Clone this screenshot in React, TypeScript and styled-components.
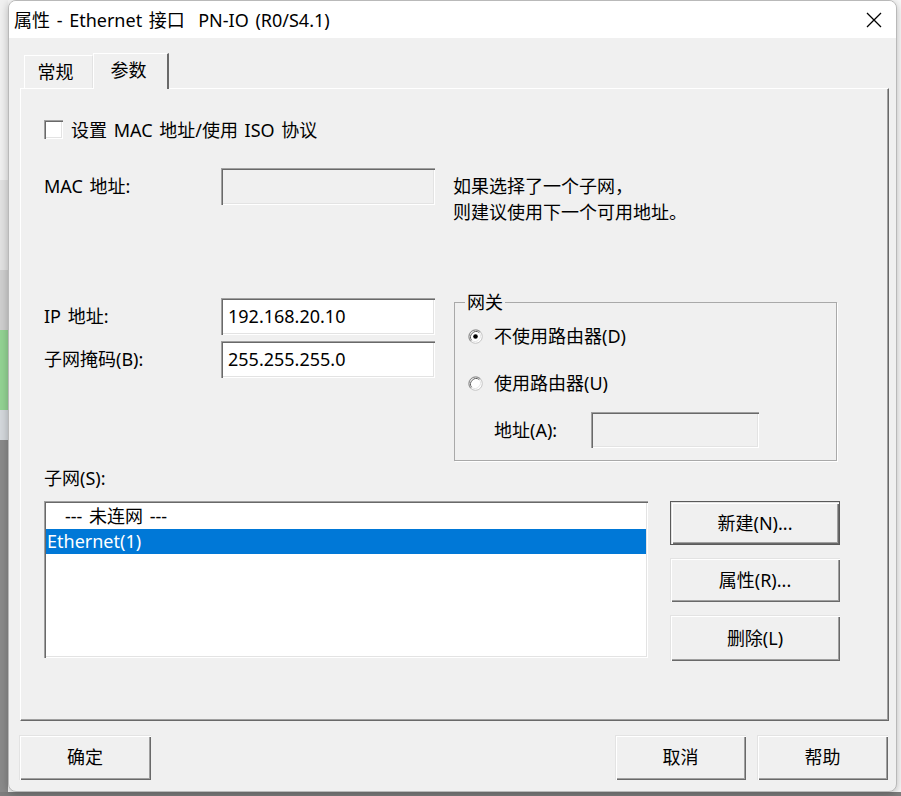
import styled, { createGlobalStyle } from 'styled-components'

const GlobalStyle = createGlobalStyle`
  html, body {
    margin: 0;
    padding: 0;
  }
  body {
    width: 901px;
    height: 796px;
    overflow: hidden;
    font-family: "Noto Sans", "Noto Sans CJK SC", sans-serif;
    font-size: 18px;
    word-spacing: 2px;
    color: #000;
  }
  * {
    box-sizing: border-box;
  }
`

const Desktop = styled.div`
  width: 901px;
  height: 796px;
  display: flex;
  padding-left: 8px;
  background:
    linear-gradient(#7d7d7d, #7d7d7d) left bottom / 100% 4px no-repeat,
    linear-gradient(to bottom,
      #f0f0f0 0 180px, #e2e2e2 180px 270px, #cfcfcf 270px 330px,
      #93d393 330px 410px, #d4d8dc 410px 440px, #8a8a8a 440px) left top / 8px 100% no-repeat,
    #f8f8f8;
`

const Dialog = styled.div`
  width: 889px;
  height: 792px;
  display: flex;
  flex-direction: column;
  background: #f0f0f0;
  border: 1px solid #b9b9b9;
  border-radius: 8px;
  overflow: hidden;
  box-shadow: 0 2px 8px rgba(0, 0, 0, 0.25);
`

const TitleBar = styled.div`
  height: 37px;
  flex: none;
  display: flex;
  align-items: center;
  justify-content: space-between;
  padding: 0 14px 0 5px;
  background: #fff;
`

const Title = styled.div`
  font-size: 18px;
  line-height: 24px;
  white-space: pre;
`

const CloseX = styled.svg`
  width: 16px;
  height: 16px;
`

const Body = styled.div`
  flex: 1;
  display: flex;
  flex-direction: column;
  padding: 15px 8px 0 11px;
`

const TabStrip = styled.div`
  height: 35px;
  display: flex;
  align-items: flex-end;
  padding-left: 4px;
`

const Tab = styled.div<{ $active?: boolean }>`
  width: ${p => (p.$active ? 76 : 69)}px;
  height: ${p => (p.$active ? 36 : 33)}px;
  display: flex;
  align-items: center;
  justify-content: center;
  font-size: 18px;
  line-height: 24px;
  padding-right: ${p => (p.$active ? 4 : 6)}px;
  padding-bottom: ${p => (p.$active ? 4 : 0)}px;
  background: #f0f0f0;
  border-top: 1px solid #fff;
  border-left: 1px solid #fff;
  border-right: ${p => (p.$active ? '2px solid #696969' : '1px solid #e3e3e3')};
  position: relative;
  margin-bottom: ${p => (p.$active ? -1 : 0)}px;
  z-index: ${p => (p.$active ? 1 : 0)};
`

const Panel = styled.div`
  width: 869px;
  height: 633px;
  display: flex;
  flex-direction: column;
  padding: 31px 0 0 23px;
  border-top: 1px solid #fff;
  border-left: 1px solid #fff;
  border-right: 1px solid #696969;
  border-bottom: 1px solid #696969;
  box-shadow: inset -1px -1px #a0a0a0;
`

const CheckRow = styled.label`
  display: flex;
  align-items: center;
  height: 19px;
  gap: 8px;
  line-height: 24px;
`

const CheckBox = styled.span`
  width: 19px;
  height: 19px;
  background: #fff;
  box-shadow: inset 1px 1px #a0a0a0, inset 2px 2px #696969, inset -1px -1px #fff, inset -2px -2px #e3e3e3;
`

const Row = styled.div<{ $top: number }>`
  display: flex;
  align-items: flex-start;
  margin-top: ${p => p.$top}px;
`

const Label = styled.div<{ $width: number }>`
  width: ${p => p.$width}px;
  flex: none;
  height: 37px;
  line-height: 36px;
  white-space: nowrap;
`

const TextBox = styled.input<{ $width: number; $height?: number }>`
  width: ${p => p.$width}px;
  height: ${p => p.$height ?? 37}px;
  flex: none;
  margin: 0;
  border: none;
  outline: none;
  padding: 0 5px 1px 7px;
  font-family: inherit;
  font-size: 18px;
  color: #000;
  background: ${p => (p.disabled ? '#f0f0f0' : '#fff')};
  box-shadow: inset 1px 1px #a0a0a0, inset 2px 2px #696969, inset -1px -1px #fff, inset -2px -2px #e3e3e3;
`

const Hint = styled.div`
  margin-left: 18px;
  padding-top: 5px;
  line-height: 26px;
`

const Column = styled.div`
  width: 410px;
  flex: none;
  display: flex;
  flex-direction: column;
  gap: 6px;
  padding-top: 6px;
`

const Field = styled.div`
  display: flex;
`

const GroupBox = styled.fieldset`
  width: 383px;
  margin: 0;
  padding: 0 0 11px 13px;
  border: 1px solid #a9a9a9;
  box-shadow: 1px 1px #fff;
  border-radius: 0;
`

const Legend = styled.legend`
  margin-left: -3px;
  padding: 0 2px;
  font-size: 18px;
  line-height: 20px;
`

const RadioRow = styled.label<{ $top: number }>`
  display: flex;
  align-items: center;
  height: 26px;
  gap: 11px;
  margin-top: ${p => p.$top}px;
  line-height: 26px;
`

const RadioDot = styled.svg`
  width: 15px;
  height: 15px;
  flex: none;
`

const AddressRow = styled.div`
  display: flex;
  margin: 16px 0 0 26px;
`

const SmallLabel = styled.div`
  height: 24px;
  line-height: 24px;
  margin-top: 5px;
`

const ListArea = styled.div`
  display: flex;
  margin-top: 11px;
`

const ListBox = styled.div`
  width: 604px;
  height: 157px;
  flex: none;
  padding: 3px 2px 2px 2px;
  background: #fff;
  box-shadow: inset 1px 1px #a0a0a0, inset 2px 2px #696969, inset -1px -1px #fff, inset -2px -2px #e3e3e3;
`

const ListItem = styled.div<{ $selected?: boolean; $indent?: number }>`
  height: 25px;
  line-height: 24px;
  padding-left: ${p => p.$indent ?? 1}px;
  white-space: pre;
  color: ${p => (p.$selected ? '#fff' : '#000')};
  background: ${p => (p.$selected ? '#0078d7' : 'transparent')};
`

const ButtonColumn = styled.div`
  display: flex;
  flex-direction: column;
  gap: 13px;
  margin-left: 22px;
`

const Button = styled.button<{ $width: number; $height?: number; $default?: boolean }>`
  width: ${p => p.$width}px;
  height: ${p => p.$height ?? 45}px;
  margin: 0;
  padding: 0 0 3px;
  font-family: inherit;
  font-size: 18px;
  color: #000;
  background: #f0f0f0;
  border: ${p => (p.$default ? '1px solid #5a5a5a' : 'none')};
  box-shadow: inset 1px 1px #e3e3e3, inset 2px 2px #fff, inset -1px -1px #696969, inset -2px -2px #a0a0a0;
`

const Footer = styled.div`
  display: flex;
  margin-top: 14px;
`

const FooterRight = styled.div`
  display: flex;
  gap: 11px;
  margin-left: auto;
`

function Radio({ checked }: { checked?: boolean }) {
  return (
    <RadioDot viewBox="0 0 15 15">
      <circle cx="7.5" cy="7.5" r="6.8" fill="#fff" stroke="#c4c4c4" strokeWidth="1" />
      <path d="M2.7 12.3 A6.8 6.8 0 0 1 12.3 2.7" fill="none" stroke="#8a8a8a" strokeWidth="1" />
      <path d="M3.6 11.4 A5.6 5.6 0 0 1 11.4 3.6" fill="none" stroke="#5f5f5f" strokeWidth="1" />
      <path d="M11.4 3.6 A5.6 5.6 0 0 1 3.6 11.4" fill="none" stroke="#e6e6e6" strokeWidth="1" />
      {checked && <circle cx="7.5" cy="7.5" r="2.3" fill="#000" />}
    </RadioDot>
  )
}

function App() {
  return (
    <>
      <GlobalStyle />
      <Desktop>
        <Dialog>
          <TitleBar>
            <Title>属性 - Ethernet 接口  PN-IO (R0/S4.1)</Title>
            <CloseX viewBox="0 0 16 16">
              <path d="M1 1 L15 15 M15 1 L1 15" stroke="#000" strokeWidth="1.3" fill="none" />
            </CloseX>
          </TitleBar>
          <Body>
            <TabStrip>
              <Tab>常规</Tab>
              <Tab $active>参数</Tab>
            </TabStrip>
            <Panel>
              <CheckRow>
                <CheckBox />
                设置 MAC 地址/使用 ISO 协议
              </CheckRow>

              <Row $top={29}>
                <Label $width={177}>MAC 地址:</Label>
                <TextBox $width={214} disabled readOnly value="" />
                <Hint>
                  如果选择了一个子网，
                  <br />
                  则建议使用下一个可用地址。
                </Hint>
              </Row>

              <Row $top={67}>
                <Column>
                  <Field>
                    <Label $width={177}>IP 地址:</Label>
                    <TextBox $width={214} readOnly value="192.168.20.10" />
                  </Field>
                  <Field>
                    <Label $width={177}>子网掩码(B):</Label>
                    <TextBox $width={214} readOnly value="255.255.255.0" />
                  </Field>
                </Column>
                <GroupBox>
                  <Legend>网关</Legend>
                  <RadioRow $top={11}>
                    <Radio checked />
                    不使用路由器(D)
                  </RadioRow>
                  <RadioRow $top={21}>
                    <Radio />
                    使用路由器(U)
                  </RadioRow>
                  <AddressRow>
                    <Label $width={97}>地址(A):</Label>
                    <TextBox $width={168} $height={36} disabled readOnly value="" />
                  </AddressRow>
                </GroupBox>
              </Row>

              <SmallLabel>子网(S):</SmallLabel>
              <ListArea>
                <ListBox>
                  <ListItem $indent={19}>--- 未连网 ---</ListItem>
                  <ListItem $selected>Ethernet(1)</ListItem>
                </ListBox>
                <ButtonColumn>
                  <Button $width={170} $height={44} $default>新建(N)...</Button>
                  <Button $width={170} $height={44}>属性(R)...</Button>
                  <Button $width={170} $height={46}>删除(L)</Button>
                </ButtonColumn>
              </ListArea>
            </Panel>
            <Footer>
              <Button $width={132} style={{ marginLeft: -1 }}>确定</Button>
              <FooterRight>
                <Button $width={131}>取消</Button>
                <Button $width={131}>帮助</Button>
              </FooterRight>
            </Footer>
          </Body>
        </Dialog>
      </Desktop>
    </>
  )
}

export default App
